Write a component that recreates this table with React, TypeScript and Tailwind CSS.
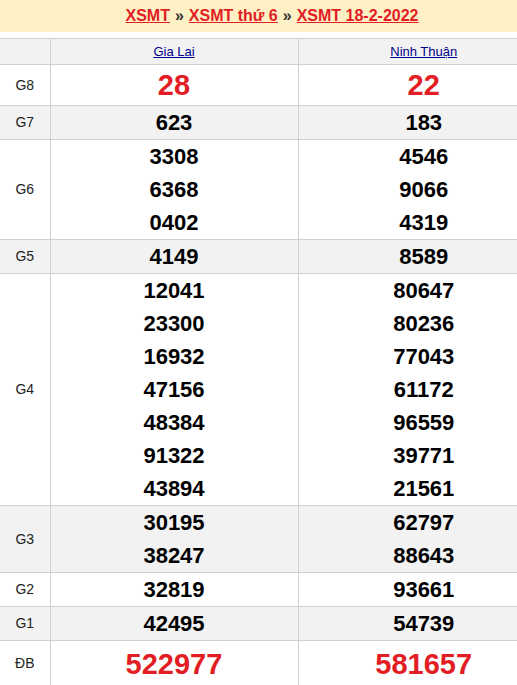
import React from 'react';

type Row = { label: string; a: string[]; b: string[]; big?: boolean; alt?: boolean };

const ROWS: Row[] = [
    { label: 'G8', a: ['28'], b: ['22'], big: true },
    { label: 'G7', a: ['623'], b: ['183'], alt: true },
    { label: 'G6', a: ['3308', '6368', '0402'], b: ['4546', '9066', '4319'] },
    { label: 'G5', a: ['4149'], b: ['8589'], alt: true },
    { label: 'G4', a: ['12041', '23300', '16932', '47156', '48384', '91322', '43894'], b: ['80647', '80236', '77043', '61172', '96559', '39771', '21561'] },
    { label: 'G3', a: ['30195', '38247'], b: ['62797', '88643'], alt: true },
    { label: 'G2', a: ['32819'], b: ['93661'] },
    { label: 'G1', a: ['42495'], b: ['54739'], alt: true },
    { label: 'ĐB', a: ['522977'], b: ['581657'], big: true },
];

const Cell = ({ nums, big }: { nums: string[]; big?: boolean }) => (
    <td className="border border-[#d0d0d0] text-center align-middle">
        {nums.map(n => (
            <div
                key={n}
                className={big ? 'text-[29px] font-bold leading-[40px] text-[#e21d24]' : 'text-[22px] font-bold leading-[33px] text-black'}
            >
                {n}
            </div>
        ))}
    </td>
);

export default function App() {
    return (
        <div className="w-[517px] overflow-hidden bg-white font-['Liberation_Sans',Arial,sans-serif]">
            <div className="w-[550px]">
                <div className="h-[32px] bg-[#fcf0c4] flex items-center justify-center text-[16px] font-bold pr-[6px]">
                    <a className="text-[#e21d24] underline">XSMT</a>
                    <span className="mx-[5px] text-[#333]">»</span>
                    <a className="text-[#e21d24] underline">XSMT thứ 6</a>
                    <span className="mx-[5px] text-[#333]">»</span>
                    <a className="text-[#e21d24] underline">XSMT 18-2-2022</a>
                </div>
                <table className="mt-[6px] w-full border-collapse table-fixed">
                    <colgroup>
                        <col className="w-[50px]" />
                        <col className="w-[248px]" />
                        <col />
                    </colgroup>
                    <thead>
                        <tr className="bg-[#f2f2f2] h-[26px]">
                            <th className="border border-l-0 border-[#d0d0d0]"></th>
                            <th className="border border-[#d0d0d0] text-[13px] font-normal text-[#00008b] underline">Gia Lai</th>
                            <th className="border border-[#d0d0d0] text-[13px] font-normal text-[#00008b] underline">Ninh Thuận</th>
                        </tr>
                    </thead>
                    <tbody>
                        {ROWS.map(r => (
                            <tr key={r.label} className={r.alt ? 'bg-[#f2f2f2]' : 'bg-white'}>
                                <td className={`border border-l-0 border-[#d0d0d0] text-center text-[14px] text-[#222] ${r.label === 'ĐB' ? 'h-[46px]' : ''}`}>{r.label}</td>
                                <Cell nums={r.a} big={r.big} />
                                <Cell nums={r.b} big={r.big} />
                            </tr>
                        ))}
                    </tbody>
                </table>
            </div>
        </div>
    );
}
